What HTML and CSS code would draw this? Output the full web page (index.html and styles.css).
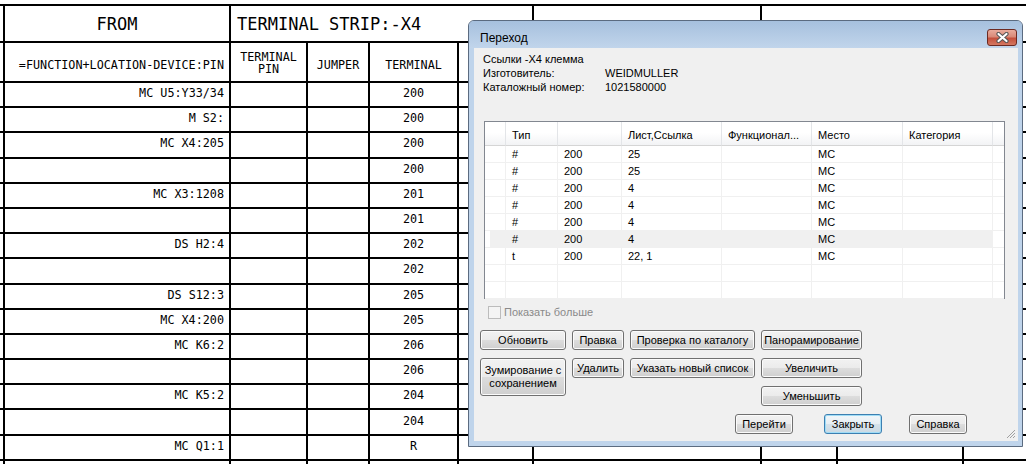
FILE: index.html
```html
<!DOCTYPE html>
<html lang="ru">
<head>
  <meta charset="UTF-8" />
  <title>Переход</title>
  <link rel="stylesheet" href="styles.css">
</head>
<body>

  <div class="sheet" id="sheet">
    <div class="cell"></div>
    <div class="cell big from">FROM</div>
    <div class="cell big strip">TERMINAL STRIP:-X4</div>
    <div class="cell"></div>
    <div class="cell rest"></div>

    <div class="cell"></div>
    <div class="cell head fn">=FUNCTION+LOCATION-DEVICE:PIN</div>
    <div class="cell pin">TERMINAL<br>PIN</div>
    <div class="cell head mid">JUMPER</div>
    <div class="cell head mid">TERMINAL</div>
    <div class="cell"></div>
    <div class="cell"></div>
    <div class="cell"></div>
    <div class="cell"></div>
    <div class="cell"></div>
  </div>

  <div class="dialog">
    <div class="titlebar">
      <span class="title">Переход</span>
      <div class="close">
        <svg width="13" height="11" viewBox="0 0 13 11">
          <path d="M2.5 2 L10.5 9 M10.5 2 L2.5 9" stroke="#555" stroke-width="4.2" stroke-linecap="round"/>
          <path d="M2.5 2 L10.5 9 M10.5 2 L2.5 9" stroke="#fff" stroke-width="2.2" stroke-linecap="round"/>
        </svg>
      </div>
    </div>

    <div class="client">
      <div class="info">
        <div class="full">Ссылки -X4 клемма</div>
        <div>Изготовитель:</div><div>WEIDMULLER</div>
        <div>Каталожный номер:</div><div>1021580000</div>
      </div>

      <div class="list">
        <div class="lv-row lv-head">
          <div></div><div>Тип</div><div></div><div>Лист,Ссылка</div><div>Функционал...</div><div>Место</div><div>Категория</div><div></div>
        </div>
        <div id="lvBody"></div>
      </div>

      <label class="more"><span class="box"></span>Показать больше</label>

      <div class="actions">
        <button class="btn">Обновить</button>
        <button class="btn">Правка</button>
        <button class="btn">Проверка по каталогу</button>
        <button class="btn">Панорамирование</button>
        <button class="btn zoom">Зумирование с<br>сохранением</button>
        <button class="btn">Удалить</button>
        <button class="btn">Указать новый список</button>
        <button class="btn">Увеличить</button>
        <button class="btn last">Уменьшить</button>
      </div>

      <div class="footer">
        <button class="btn">Перейти</button>
        <button class="btn default">Закрыть</button>
        <button class="btn">Справка</button>
      </div>

      <svg class="grip" width="11" height="11" viewBox="0 0 11 11">
        <path d="M10 2 L2 10 M10 5 L5 10 M10 8 L8 10" stroke="#a0a0a0" stroke-width="1"/>
      </svg>
    </div>
  </div>

  <script>
    const wires = [
      ["MC U5:Y33/34", "200"],
      ["M S2:", "200"],
      ["MC X4:205", "200"],
      ["", "200"],
      ["MC X3:1208", "201"],
      ["", "201"],
      ["DS H2:4", "202"],
      ["", "202"],
      ["DS S12:3", "205"],
      ["MC X4:200", "205"],
      ["MC K6:2", "206"],
      ["", "206"],
      ["MC K5:2", "204"],
      ["", "204"],
      ["MC Q1:1", "R"],
      ["", ""]
    ];

    const refs = [
      ["#", "200", "25", "", "MC", ""],
      ["#", "200", "25", "", "MC", ""],
      ["#", "200", "4", "", "MC", ""],
      ["#", "200", "4", "", "MC", ""],
      ["#", "200", "4", "", "MC", ""],
      ["#", "200", "4", "", "MC", ""],
      ["t", "200", "22, 1", "", "MC", ""],
      ["", "", "", "", "", ""],
      ["", "", "", "", "", ""]
    ];
    const selectedRow = 5;

    const sheet = document.getElementById("sheet");
    for (const [device, terminal] of wires) {
      const cells = ["", device, "", "", terminal, "", "", "", "", ""];
      cells.forEach((text, i) => {
        const cell = document.createElement("div");
        cell.className = "cell row";
        if (i === 1) cell.classList.add("fn");
        if (i === 4) cell.classList.add("mid");
        cell.textContent = text;
        sheet.appendChild(cell);
      });
    }

    const lvBody = document.getElementById("lvBody");
    refs.forEach((ref, index) => {
      const row = document.createElement("div");
      row.className = "lv-row";
      if (index === selectedRow) row.classList.add("selected");
      for (const text of ["", ...ref, ""]) {
        const cell = document.createElement("div");
        cell.textContent = text;
        row.appendChild(cell);
      }
      lvBody.appendChild(row);
    });
  </script>

</body>
</html>
```

FILE: styles.css
```css
body {
  margin: 0;
  background: #fff;
  overflow: hidden;
  position: relative;
  height: 464px;
}

/* drawing behind the dialog */
.sheet {
  display: grid;
  grid-template-columns: 44px 226px 77px 62px 89px 75px 228px 76px 126px 100px;
  grid-template-rows: 37px 40px repeat(16, 25.2px);
  width: 1103px;
  margin: 4px 0 0 -39px;
  border-top: 2px solid #000;
  font-family: "DejaVu Sans Mono", monospace;
  font-size: 11.75px;
  color: #000;
}

.cell {
  box-sizing: border-box;
  border-right: 2px solid #000;
  border-bottom: 2px solid #000;
  display: flex;
  align-items: center;
  white-space: nowrap;
  overflow: hidden;
}

.big {
  font-size: 17px;
}

.from {
  justify-content: center;
}

.strip {
  grid-column: span 4;
  padding-left: 6px;
}

.rest {
  grid-column: span 3;
}

.head {
  padding-top: 5px;
}

.fn {
  justify-content: flex-end;
  padding-right: 5px;
}

.mid {
  justify-content: center;
}

.pin {
  justify-content: center;
  text-align: center;
  line-height: 12px;
  padding-top: 1px;
}

.row {
  padding-bottom: 3px;
}

/* dialog */
.dialog {
  position: absolute;
  left: 468px;
  top: 20px;
  width: 555px;
  height: 427px;
  box-sizing: border-box;
  border: 1px solid #5b6b80;
  border-radius: 6px 6px 0 0;
  background: #bfd4eb;
  padding: 0 4px 5px 5px;
  display: flex;
  flex-direction: column;
  font-family: "Liberation Sans", Arial, sans-serif;
  font-size: 11px;
  color: #000;
}

.titlebar {
  height: 27px;
  flex: none;
  margin: 0 -4px 0 -5px;
  padding: 0 5px 0 11px;
  display: flex;
  justify-content: space-between;
  align-items: flex-start;
  border-radius: 5px 5px 0 0;
  background: linear-gradient(#a6c0de, #c1d5eb);
}

.title {
  font-size: 12px;
  margin-top: 10px;
}

.close {
  width: 30px;
  height: 17px;
  margin-top: 8px;
  box-sizing: border-box;
  border: 1px solid #6c2a22;
  border-radius: 3px;
  background: linear-gradient(#e9ab9c, #d98a78 45%, #c4503c 55%, #d47862);
  display: flex;
  align-items: center;
  justify-content: center;
}

.client {
  flex: 1;
  position: relative;
  background: #f0f0f0;
}

.info {
  display: grid;
  grid-template-columns: 122px auto;
  line-height: 14px;
  margin: 4px 0 0 9px;
}

.info .full {
  grid-column: span 2;
}

.list {
  width: 521px;
  height: 178px;
  box-sizing: border-box;
  margin: 27px 0 0 10px;
  border: 1px solid #828790;
  background: #fff;
}

.lv-row {
  display: grid;
  grid-template-columns: 21px 52px 64px 100px 90px 91px 90px 1fr;
  height: 17px;
  line-height: 16px;
}

.lv-row > div {
  box-sizing: border-box;
  border-right: 1px solid #f0f0f0;
  border-bottom: 1px solid #f0f0f0;
  padding-left: 6px;
  white-space: nowrap;
  overflow: hidden;
}

.lv-row > div:last-child {
  border-right: none;
  background: #fff;
}

.lv-row.selected {
  background: linear-gradient(to right, #fff 5px, #f0f0f0 5px);
}

.lv-head {
  height: 24px;
  line-height: 24px;
  background: linear-gradient(#fff 45%, #f1f2f4);
}

.lv-head > div {
  border-right: 1px solid #e3e5e8;
  border-bottom: 1px solid #d5d5d5;
  padding-top: 1px;
}

.lv-head > div:last-child {
  background: transparent;
}

.more {
  display: flex;
  align-items: center;
  height: 14px;
  margin: 6px 0 0 14px;
  color: #8a8a8a;
}

.box {
  width: 13px;
  height: 13px;
  box-sizing: border-box;
  border: 1px solid #bcbcbc;
  background: #f4f4f4;
  margin-right: 3px;
}

.actions {
  display: grid;
  grid-template-columns: 86px 52px 125px 101px;
  grid-template-rows: 20px 20px 20px;
  gap: 8px 6px;
  margin: 11px 0 0 6px;
}

.btn {
  box-sizing: border-box;
  height: 20px;
  padding: 0;
  border: 1px solid #707070;
  border-radius: 3px;
  background: linear-gradient(#f2f2f2, #ebebeb 50%, #dddddd 50%, #cfcfcf);
  box-shadow: inset 0 0 0 1px #fbfbfb;
  font-family: "Liberation Sans", Arial, sans-serif;
  font-size: 11px;
  color: #000;
  white-space: nowrap;
}

.btn.zoom {
  grid-row: 2 / span 2;
  height: 38px;
  line-height: 13px;
}

.btn.last {
  grid-column: 4;
}

.footer {
  display: flex;
  gap: 31px;
  margin: 8px 0 0 261px;
}

.footer .btn {
  width: 58px;
}

.footer .btn:last-child {
  margin-left: -4px;
}

.btn.default {
  border-color: #3c7fb1;
  box-shadow: inset 0 0 0 1px #9fdcf6;
  background: linear-gradient(#f0f6fa, #e7eef3 50%, #d6e2ea 50%, #cbd9e3);
}

.grip {
  position: absolute;
  right: 2px;
  bottom: 2px;
}
```
